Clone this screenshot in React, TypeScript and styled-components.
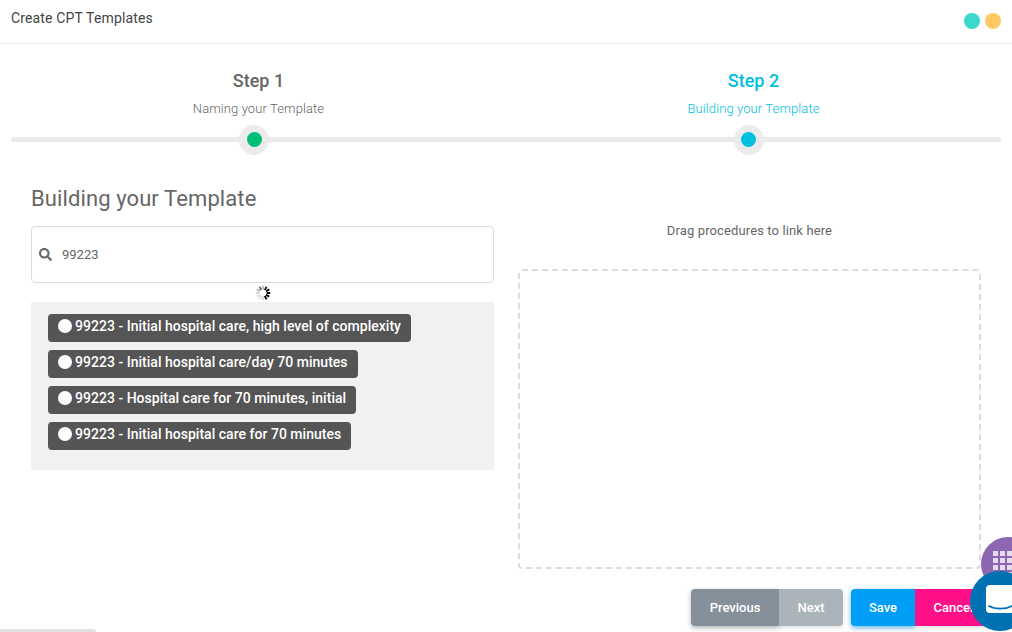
import React from 'react';
import styled, { createGlobalStyle } from 'styled-components';
import { FaSearch } from 'react-icons/fa';

const GlobalStyle = createGlobalStyle`
    html, body {
        margin: 0;
        height: 100%;
        overflow: hidden;
        background: #ffffff;
        font-family: Roboto, "Liberation Sans", sans-serif;
    }
    * { box-sizing: border-box; }
`;

const Page = styled.div`
    position: relative;
    width: 1012px;
    height: 632px;
    overflow: hidden;
`;

const Header = styled.div`
    display: flex;
    justify-content: space-between;
    align-items: center;
    height: 44px;
    padding: 0 11px;
    border-bottom: 1px solid #ebebeb;
`;

const Title = styled.div`
    font-size: 14px;
    font-weight: 400;
    letter-spacing: 0.15px;
    color: #444;
    margin-top: -7px;
`;

const WindowDots = styled.div`
    display: flex;
    gap: 5px;
    margin-top: -1px;
`;

const WindowDot = styled.span<{ color: string }>`
    width: 16px;
    height: 16px;
    border-radius: 50%;
    background: ${({ color }) => color};
`;

const Stepper = styled.div`
    display: grid;
    grid-template-columns: 1fr 1fr;
    padding: 0 11px;
    margin-top: 26px;
`;

const Step = styled.div<{ active?: boolean }>`
    display: flex;
    flex-direction: column;
    align-items: center;
    color: ${({ active }) => (active ? '#00c0e0' : '#666')};
`;

const StepName = styled.div`
    font-size: 18px;
    font-weight: 500;
    line-height: 22px;
`;

const StepHint = styled.div`
    font-size: 13px;
    font-weight: 300;
    letter-spacing: 0.1px;
    line-height: 16px;
    margin-top: 9px;
`;

const Track = styled.div<{ first?: boolean }>`
    position: relative;
    display: flex;
    justify-content: center;
    width: 100%;
    height: 30px;
    margin-top: 8px;
    padding-right: 9px;

    &::before {
        content: '';
        position: absolute;
        left: 0;
        right: 0;
        top: 12px;
        height: 5px;
        background: #ebebeb;
        border-radius: ${({ first }) => (first ? '3px 0 0 3px' : '0 3px 3px 0')};
    }
`;

const Knob = styled.div`
    position: relative;
    display: flex;
    align-items: center;
    justify-content: center;
    width: 30px;
    height: 30px;
    border-radius: 50%;
    background: #ebebeb;
`;

const KnobDot = styled.span<{ color: string; nudge?: boolean }>`
    width: 15px;
    height: 15px;
    margin-bottom: 2px;
    margin-right: ${({ nudge }) => (nudge ? '2px' : '0')};
    border-radius: 50%;
    background: ${({ color }) => color};
`;

const Columns = styled.div`
    display: grid;
    grid-template-columns: 463px 463px;
    gap: 24px;
    padding: 0 31px;
    margin-top: 29px;
`;

const Column = styled.div`
    display: flex;
    flex-direction: column;
`;

const Heading = styled.h2`
    margin: 0;
    font-size: 22px;
    line-height: 28px;
    font-weight: 400;
    letter-spacing: 0.1px;
    color: #666;
    margin-top: 1px;
`;

const SearchBox = styled.div`
    display: flex;
    align-items: center;
    gap: 10px;
    height: 57px;
    margin-top: 13px;
    padding: 0 7px;
    border: 1px solid #dcdcdc;
    border-radius: 4px;
    font-size: 13px;
    color: #666;

    svg {
        color: #666;
        font-size: 13px;
    }
`;

const SpinnerRow = styled.div`
    display: flex;
    justify-content: center;
    align-items: center;
    height: 19px;
`;

const ResultPanel = styled.div`
    display: flex;
    flex-direction: column;
    align-items: flex-start;
    gap: 8px;
    height: 168px;
    padding: 12px 17px;
    background: #f1f1f1;
`;

const Chip = styled.div`
    display: flex;
    align-items: center;
    gap: 3px;
    height: 28px;
    padding: 0 10px 4px;
    border-radius: 4px;
    background: #555555;
    color: #ffffff;
    font-size: 14px;
    font-weight: 500;
    letter-spacing: 0.02px;
    white-space: nowrap;
`;

const ChipDot = styled.span`
    width: 14px;
    height: 14px;
    border-radius: 50%;
    background: #ffffff;
`;

const DropHint = styled.div`
    margin-top: 38px;
    text-align: center;
    font-size: 13px;
    letter-spacing: 0.12px;
    line-height: 18px;
    color: #666;
`;

const DropZone = styled.div`
    height: 300px;
    margin-top: 29px;
    border: 2px dashed #dcdcdc;
    border-radius: 4px;
`;

const Actions = styled.div`
    display: flex;
    justify-content: flex-end;
    gap: 8px;
    margin-top: 20px;
    margin-right: -11px;
`;

const ButtonGroup = styled.div`
    display: flex;
    border-radius: 4px;
    box-shadow: 0 2px 5px rgba(0, 0, 0, 0.12);
`;

const ActionButton = styled.button<{ bg: string; width: number; glow?: string }>`
    position: relative;
    width: ${({ width }) => width}px;
    height: 37px;
    padding: 0;
    border: 0;
    background: ${({ bg }) => bg};
    box-shadow: ${({ glow }) => (glow ? `0 2px 5px ${glow}` : 'none')};
    color: #ffffff;
    font-family: inherit;
    font-size: 13px;
    font-weight: 500;

    &:first-child {
        border-radius: 4px 0 0 4px;
    }

    &:last-child {
        border-radius: 0 4px 4px 0;
    }
`;

const AppsBubble = styled.div`
    position: absolute;
    left: 981px;
    top: 537px;
    display: flex;
    align-items: center;
    width: 54px;
    height: 54px;
    padding-left: 12px;
    border-radius: 50%;
    background: #8e67b3;
`;

const AppsGrid = styled.div`
    display: grid;
    grid-template-columns: repeat(4, 5px);
    gap: 2px;

    span {
        width: 5px;
        height: 5px;
        background: #e6dcef;
    }
`;

const ChatBubble = styled.div`
    position: absolute;
    left: 970px;
    top: 571px;
    width: 60px;
    height: 60px;
    border-radius: 50%;
    background: #0071b2;
`;

const ChatIcon = styled.svg`
    position: absolute;
    left: 16px;
    top: 14px;
`;

const ScrollThumb = styled.div`
    position: absolute;
    left: 0;
    bottom: 0;
    width: 96px;
    height: 3px;
    background: #dfe1e3;
    border-radius: 0 3px 0 0;
`;

const Spinner = () => (
    <svg width="16" height="16" viewBox="0 0 16 16">
        {Array.from({ length: 12 }).map((_, i) => (
            <line
                key={i}
                x1="8"
                y1="4.5"
                x2="8"
                y2="0.8"
                stroke="#000"
                strokeWidth="2"
                opacity={[0.25, 0.85, 1, 1, 1, 1, 0.15, 0.12, 0.12, 0.15, 0.3, 0.55][i]}
                transform={`rotate(${i * 30} 8 8)`}
            />
        ))}
    </svg>
);

const results = [
    '99223 - Initial hospital care, high level of complexity',
    '99223 - Initial hospital care/day 70 minutes',
    '99223 - Hospital care for 70 minutes, initial',
    '99223 - Initial hospital care for 70 minutes',
];

export default function App() {
    return (
        <Page>
            <GlobalStyle />
            <Header>
                <Title>Create CPT Templates</Title>
                <WindowDots>
                    <WindowDot color="#3ad8cb" />
                    <WindowDot color="#ffca63" />
                </WindowDots>
            </Header>

            <Stepper>
                <Step>
                    <StepName>Step 1</StepName>
                    <StepHint>Naming your Template</StepHint>
                    <Track first>
                        <Knob>
                            <KnobDot color="#00bd78" />
                        </Knob>
                    </Track>
                </Step>
                <Step active>
                    <StepName>Step 2</StepName>
                    <StepHint>Building your Template</StepHint>
                    <Track>
                        <Knob>
                            <KnobDot color="#00c0e0" nudge />
                        </Knob>
                    </Track>
                </Step>
            </Stepper>

            <Columns>
                <Column>
                    <Heading>Building your Template</Heading>
                    <SearchBox>
                        <FaSearch />
                        <span>99223</span>
                    </SearchBox>
                    <SpinnerRow>
                        <Spinner />
                    </SpinnerRow>
                    <ResultPanel>
                        {results.map((r) => (
                            <Chip key={r}>
                                <ChipDot />
                                {r}
                            </Chip>
                        ))}
                    </ResultPanel>
                </Column>
                <Column>
                    <DropHint>Drag procedures to link here</DropHint>
                    <DropZone />
                    <Actions>
                        <ButtonGroup>
                            <ActionButton bg="#85909a" width={88} glow="rgba(0, 0, 0, 0.18)">Previous</ActionButton>
                            <ActionButton bg="#abb4bb" width={64}>Next</ActionButton>
                        </ButtonGroup>
                        <ButtonGroup>
                            <ActionButton bg="#009ef7" width={64} glow="rgba(0, 158, 247, 0.5)">Save</ActionButton>
                            <ActionButton bg="#ff1089" width={77}>Cancel</ActionButton>
                        </ButtonGroup>
                    </Actions>
                </Column>
            </Columns>

            <AppsBubble>
                <AppsGrid>
                    {Array.from({ length: 16 }).map((_, i) => (
                        <span key={i} />
                    ))}
                </AppsGrid>
            </AppsBubble>
            <ChatBubble>
                <ChatIcon width="40" height="28" viewBox="0 0 40 28">
                    <path d="M4 0h36v28H4a4 4 0 0 1-4-4V4a4 4 0 0 1 4-4z" fill="#fff" />
                    <path d="M3 21c6 3.5 16 3.5 23 0" fill="none" stroke="#0071b2" strokeWidth="1.8" strokeLinecap="round" />
                </ChatIcon>
            </ChatBubble>
            <ScrollThumb />
        </Page>
    );
}
